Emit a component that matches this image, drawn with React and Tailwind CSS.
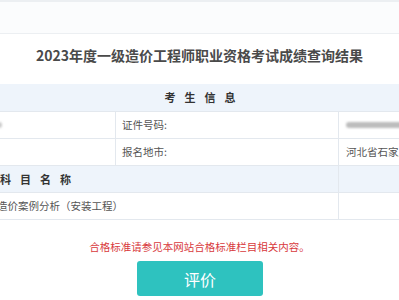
const font = { fontFamily: '"Noto Sans CJK SC", "Noto Sans", sans-serif' };

const Row = ({ children, head = false }) => (
  <div className={`flex h-[27px] border-b border-[#e3e8ee] ${head ? 'bg-[#eef4fb]' : 'bg-white'}`}>
    {children}
  </div>
);

export default function App() {
  return (
    <div className="w-[399px] h-[300px] overflow-hidden bg-white text-[#555]" style={font}>
      <div className="h-[34px] border-t-2 border-b border-[#eceff2] bg-[#fbfcfd]" />

      <div className="h-[50px] pt-[12px]">
        <h1 className="text-center text-[14px] leading-[18px] font-bold text-[#4a4a4a]">
          2023年度一级造价工程师职业资格考试成绩查询结果
        </h1>
      </div>

      <div className="overflow-hidden">
        <div className="ml-[-60px] w-[520px] text-[10.5px]">
          <div className="flex h-[28px] items-center justify-center border-b border-[#e3e8ee] bg-[#eef4fb]">
            <span className="ml-[9px] font-bold tracking-[9px] text-[11px] text-[#333]">考生信息</span>
          </div>

          <Row>
            <div className="w-[176px] flex items-center border-r border-[#e3e8ee]">
              <span className="ml-[22px] h-[6px] w-[40px] rounded-sm bg-[#c9c9c9] blur-[1px]" />
            </div>
            <div className="w-[223px] flex items-center border-r border-[#e3e8ee] pl-[6px]">证件号码:</div>
            <div className="flex-1 flex items-center pl-[7px]">
              <span className="h-[6px] w-[80px] rounded-sm bg-[#bdbdbd] blur-[1px]" />
            </div>
          </Row>

          <Row>
            <div className="w-[176px] border-r border-[#e3e8ee]" />
            <div className="w-[223px] flex items-center border-r border-[#e3e8ee] pl-[6px]">报名地市:</div>
            <div className="flex-1 flex items-center pl-[7px] whitespace-nowrap">河北省石家庄市</div>
          </Row>

          <Row head>
            <div className="w-[399px] flex items-center border-r border-[#e3e8ee] pl-[60px]">
              <span className="font-bold tracking-[9px] text-[11px] text-[#333]">科目名称</span>
            </div>
            <div className="flex-1" />
          </Row>

          <Row>
            <div className="w-[399px] flex items-center border-r border-[#e3e8ee] pl-[57px] whitespace-nowrap">
              造价案例分析（安装工程）
            </div>
            <div className="flex-1" />
          </Row>
        </div>
      </div>

      <p className="mt-[20px] text-center text-[10.5px] leading-[14px] text-[#d8393c]">
        合格标准请参见本网站合格标准栏目相关内容。
      </p>

      <div className="mt-[7px] flex justify-center">
        <button
          type="button"
          className="ml-[1px] h-[35px] w-[126px] rounded-[3px] bg-[#2ec2bf] text-[16px] text-white"
        >
          评价
        </button>
      </div>
    </div>
  );
}
